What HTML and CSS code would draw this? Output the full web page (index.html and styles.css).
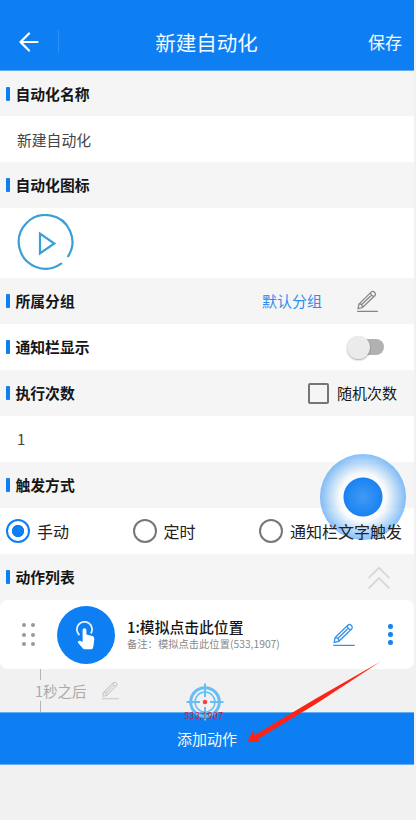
FILE: index.html
```html
<!DOCTYPE html>
<html lang="zh-CN">
<head>
<meta charset="utf-8">
<title>新建自动化</title>
<link rel="stylesheet" href="styles.css">
</head>
<body>
<svg class="defs" width="0" height="0">
  <defs>
    <symbol id="pencil" viewBox="0 0 24 24">
      <path d="M2.2 19.4 3.1 14.6 15.8 2.2Q17.6 .7 19.4 2.4 21 4.2 19.6 6L6.8 18.3ZM3.1 14.6Q6.8 14.4 6.8 18.3M15.2 3Q16 6.6 19 6.6M6 15.2 15.6 6M1.2 22.4H22.8"/>
    </symbol>
  </defs>
</svg>
<main class="app">
  <header class="topbar">
    <svg class="back" viewBox="0 0 20 20"><path d="M10 1.5 1.5 10 10 18.5M2 10H18.5"/></svg>
    <span class="split"></span>
    <h1>新建自动化</h1>
    <span class="save">保存</span>
  </header>
  <div class="row shade first"><h2>自动化名称</h2></div>
  <div class="row value name">新建自动化</div>
  <div class="row shade"><h2>自动化图标</h2></div>
  <div class="row icon-row">
    <svg class="play" viewBox="0 0 58 58"><path d="M52.2 42.2A26.8 26.8 0 1 0 45.1 49.7M24 19.7V39.3L38.3 29.5Z"/></svg>
  </div>
  <div class="row shade"><h2>所属分组</h2><span class="group">默认分组</span><svg class="pencil grey"><use href="#pencil"/></svg></div>
  <div class="row"><h2>通知栏显示</h2><span class="switch"><i></i></span></div>
  <div class="row shade"><h2>执行次数</h2><span class="check"></span><span class="check-label">随机次数</span></div>
  <div class="row value count">1</div>
  <div class="row shade"><h2>触发方式</h2></div>
  <div class="row radios">
    <span class="floating"></span>
    <div class="radio on"><i></i>手动</div>
    <div class="radio"><i></i>定时</div>
    <div class="radio"><i></i>通知栏文字触发</div>
  </div>
  <div class="row shade"><h2>动作列表</h2>
    <svg class="chevrons" viewBox="0 0 24 24"><path d="M1.5 12.2 12 1.8 22.5 12.2M1.5 22.5 12 12.1 22.5 22.5"/></svg>
  </div>
  <section class="card">
    <div class="grip"><i></i><i></i><i></i><i></i><i></i><i></i></div>
    <div class="tap">
      <svg viewBox="0 0 22 30">
        <path class="ring" d="M4.4 14.1A7.6 7.6 0 1 1 15.8 12.6"/>
        <path class="hand" d="M7.6 9Q7.6 7.2 9.5 7.2T11.4 9V13.6L17.4 15Q19.4 15.5 19.3 18L18.4 25.5Q18.1 28.2 15.8 28.2H9.7Q8.4 28.2 7.5 27L3 21.7Q2.5 21 3.3 20.3 4.3 19.3 5.7 20L7.6 21Z"/>
      </svg>
    </div>
    <div class="info"><strong>1:模拟点击此位置</strong><small>备注：模拟点击此位置(533,1907)</small></div>
    <svg class="pencil blue"><use href="#pencil"/></svg>
    <div class="more"><i></i><i></i><i></i></div>
  </section>
  <div class="delay">
    <span class="line"></span>
    <div class="delay-text">1秒之后<svg class="pencil pale"><use href="#pencil"/></svg></div>
    <span class="line"></span>
  </div>
  <button class="add">添加动作</button>
  <div class="target">
    <svg viewBox="0 0 38 38">
      <g class="aim"><circle class="outer" cx="19" cy="19" r="14.3"/><circle class="inner" cx="19" cy="19" r="10"/><path d="M19 .5V14M19 24V37.5M.5 19H14M24 19H37.5"/></g>
      <circle class="dot" cx="19" cy="19" r="2.3"/>
    </svg>
    <span>533,1907</span>
  </div>
  <svg class="arrow" viewBox="0 0 136 84"><path d="M134.7 1.5 70 38.5 8.8 75 7 70.8 1.2 81.8 14.2 81.8 12 79 71 43.2Z"/></svg>
</main>
</body>
</html>
```

FILE: styles.css
```css
* { box-sizing: border-box; }
body {
  margin: 0;
  background: #f1f1f1;
  color: #161616;
  font-family: "Noto Sans CJK SC", sans-serif;
  font-size: 15px;
  line-height: 22px;
}
svg { display: block; fill: none; flex: none; }
.defs { position: absolute; }
.app { position: relative; width: 414px; height: 820px; overflow: hidden; }

.topbar {
  display: flex;
  align-items: center;
  height: 71px;
  padding: 13px 12px 0 19px;
  background: #0e7ff3;
  border-bottom: 1px solid #64adf5;
  color: #f4f9ff;
}
.back { width: 20px; height: 20px; stroke: #fff; stroke-width: 2.2; stroke-linecap: round; stroke-linejoin: round; }
.split { width: 1px; height: 23px; margin-left: 19px; background: #2b8ff6; }
h1 { flex: 1; margin: 0; padding-right: 14px; font-size: 20.5px; font-weight: 400; text-align: center; }
.save { font-size: 17px; }

.row { display: flex; align-items: center; height: 46px; background: #fff; }
.row.first { height: 45px; }
.shade { background: #f5f5f5; }
h2 {
  display: flex;
  align-items: center;
  margin: 0 auto 0 6px;
  font-size: 14.8px;
  font-weight: 700;
}
h2::before { content: ""; width: 3.5px; height: 14px; margin-right: 6px; border-radius: 1px; background: #0e7ff3; }
.value { padding-left: 17px; font-size: 14.8px; color: #444; }
.name { padding-top: 1px; }
.count { font-size: 15px; }
.icon-row { height: 70px; padding-left: 16px; }
.play { width: 58px; height: 58px; stroke: #38a0d3; stroke-width: 2.2; stroke-linecap: round; }
.group { margin-right: 34px; font-size: 15px; color: #2b8ff0; }
.pencil { width: 24px; height: 24px; stroke-width: 1.3; }
.grey { margin-right: 35px; stroke: #858585; width: 23px; height: 23px; }
.switch { width: 34px; height: 16px; margin-right: 30px; border-radius: 8px; background: #b1b1b1; }
.switch i { display: block; width: 23px; height: 23px; margin: -3px 0 0 -3px; border-radius: 50%; background: #ebebeb; box-shadow: 0 1px 2px #0005; }
.check { width: 21px; height: 21px; border: 2px solid #757575; border-radius: 2px; }
.check-label { margin: 0 17px 0 8px; font-size: 15px; }

.radios { position: relative; padding-left: 6px; }
.radio { position: relative; display: flex; align-items: center; width: 126.5px; font-size: 16px; color: #222; white-space: nowrap; }
.radio i { flex: none; width: 24px; height: 24px; margin-right: 7px; border: 2px solid #777; border-radius: 50%; }
.on i { border-color: #0e7ff3; background: radial-gradient(circle, #0e7ff3 5.8px, #fff 6.5px); }
.floating {
  position: absolute;
  left: 319.5px;
  top: -54px;
  width: 86px;
  height: 86px;
  border-radius: 50%;
  background: radial-gradient(circle, #4399f2 0, #248af3 14px, #1983f2 19px, rgba(255, 255, 255, .75) 20px, rgba(246, 249, 252, .65) 24px, rgba(50, 148, 245, .6) 43px);
}
.chevrons { width: 24px; height: 24px; margin: 2px 23px 0 0; stroke: #d8d8d8; stroke-width: 1.8; }

.card { display: flex; align-items: center; height: 69px; background: #fff; border-radius: 8px; box-shadow: 0 -8px #f5f5f5; clip-path: none; }
.grip { display: grid; grid-template-columns: 4px 4px; gap: 5.5px 5px; margin-left: 22px; }
.grip i, .more i { width: 4px; height: 4px; border-radius: 50%; background: #999; }
.tap { display: flex; flex: none; align-items: center; justify-content: center; width: 58px; height: 58px; margin-left: 22px; border-radius: 50%; background: #0e7ff3; }
.tap svg { width: 22px; height: 30px; margin-top: 3px; }
.ring { stroke: #e7f3ff; stroke-width: 1.8; }
.hand { fill: #fff; }
.info { display: flex; flex: none; flex-direction: column; width: 220px; padding-left: 12px; }
.info strong { font-size: 14.8px; font-weight: 500; line-height: 17px; padding-top: 1px; }
.info small { font-size: 10.3px; line-height: 17px; color: #888; white-space: nowrap; }
.blue { margin-left: -3px; stroke: #3590ed; }
.more { display: grid; gap: 3.7px; margin-left: 32px; }
.more i { width: 4.5px; height: 4.5px; background: #1681f0; }

.delay { display: flex; flex-direction: column; justify-content: space-between; height: 43px; padding-left: 35px; color: #aaa; }
.line { width: 1px; height: 11px; margin-left: 5px; background: #b5b5b5; }
.delay-text { display: flex; align-items: center; height: 20px; font-size: 14.5px; }
.pale { width: 19px; height: 19px; margin-left: 14px; stroke: #c8c8c8; }
.add { display: block; width: 100%; height: 53px; padding: 0; border: solid #64adf5; border-width: 1px 0; background: #0e7ff3; color: #f4f9ff; font: 15px/22px "Noto Sans CJK SC", sans-serif; }
.target { position: absolute; left: 182px; top: 683px; width: 46px; }
.target svg { width: 38px; height: 38px; margin: 0 auto; }
.aim { stroke: #67bdf5; stroke-width: 2; }
.outer { stroke-width: 3; }
.inner { stroke-width: 1.5; }
.dot { fill: #f14444; }
.target span { position: absolute; left: 2px; top: 27px; font: 9px/12px Roboto, sans-serif; color: #be2951; letter-spacing: .3px; }
.arrow { position: absolute; left: 246px; top: 660px; width: 136px; height: 84px; fill: #fb2415; }
```
